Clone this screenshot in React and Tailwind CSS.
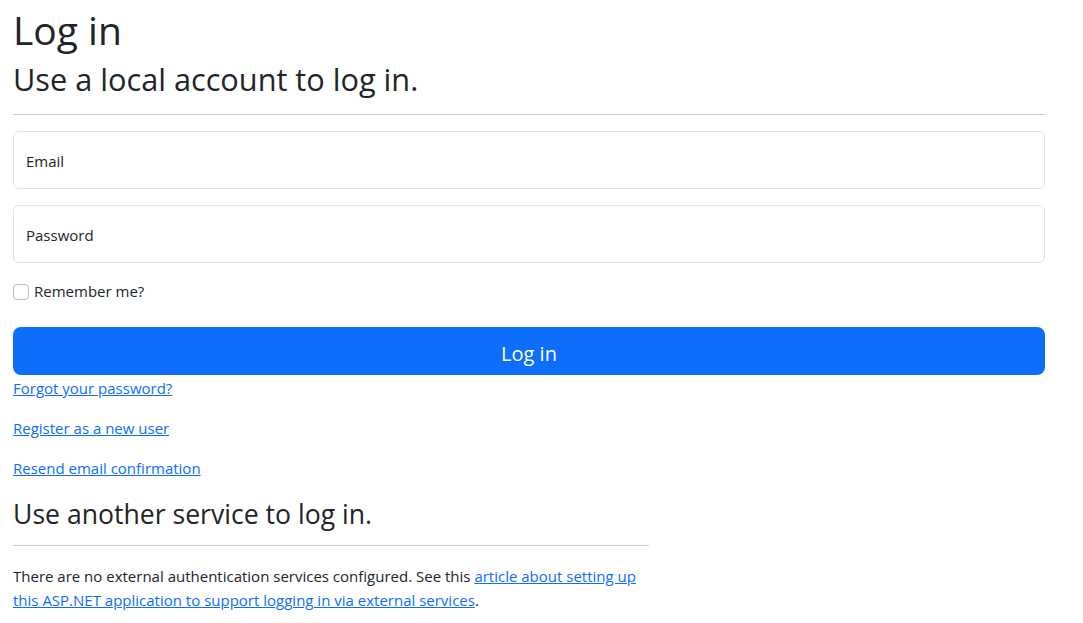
import React from 'react';

const font = "font-['Open_Sans','Noto_Sans',sans-serif]";

const FloatingInput = ({ label, type }) => (
  <div className="relative mb-4">
    <input
      type={type}
      placeholder=" "
      className="block h-[58px] w-full rounded-[6px] border border-[#dee2e6] bg-white px-3 text-[16px] text-[#212529] outline-none"
    />
    <label className="pointer-events-none absolute left-[13px] top-px flex h-[58px] items-center text-[15px] text-[#212529]">
      {label}
    </label>
  </div>
);

const LinkP = ({ children }) => (
  <p className="mb-4 text-[15px] leading-6">
    <a href="#" className="text-[#0d6efd] underline">{children}</a>
  </p>
);

export default function App() {
  return (
    <div className={`${font} bg-white px-[13px] pt-[7px] text-[#212529]`}>
      <h1 className="mb-2 text-[39px] leading-[46px]">Log in</h1>
      <section className="w-[1032px]">
        <h2 className="text-[30.7px] leading-[37px]">Use a local account to log in.</h2>
        <hr className="my-4 border-t border-[#c8c9ca]" />
        <form onSubmit={(e) => e.preventDefault()}>
          <FloatingInput label="Email" type="email" />
          <FloatingInput label="Password" type="password" />
          <div className="mb-4 pb-2">
            <label className="flex h-6 items-center pt-px text-[15px]">
              <span className="mr-[5px] inline-block h-4 w-4 rounded-[4px] border border-[#bfbfbf] bg-white" />
              Remember me?
            </label>
          </div>
          <button
            type="submit"
            className="block h-12 w-full rounded-lg bg-[#0d6efd] pt-[5px] text-[20px] text-white"
          >
            Log in
          </button>
          <div className="pt-px">
            <LinkP>Forgot your password?</LinkP>
            <LinkP>Register as a new user</LinkP>
            <LinkP>Resend email confirmation</LinkP>
          </div>
        </form>
      </section>
      <section className="w-[636px]">
        <h3 className="mt-[2px] pt-[3px] text-[26.6px] leading-[30px]">Use another service to log in.</h3>
        <hr className="mt-4 mb-[18px] border-t border-[#c8c9ca]" />
        <p className="text-[15px] leading-6">
          There are no external authentication services configured. See this{' '}
          <a href="#" className="text-[#0d6efd] underline">
            article about setting up
            <br />
            this ASP.NET application to support logging in via external services
          </a>
          .
        </p>
      </section>
    </div>
  );
}
